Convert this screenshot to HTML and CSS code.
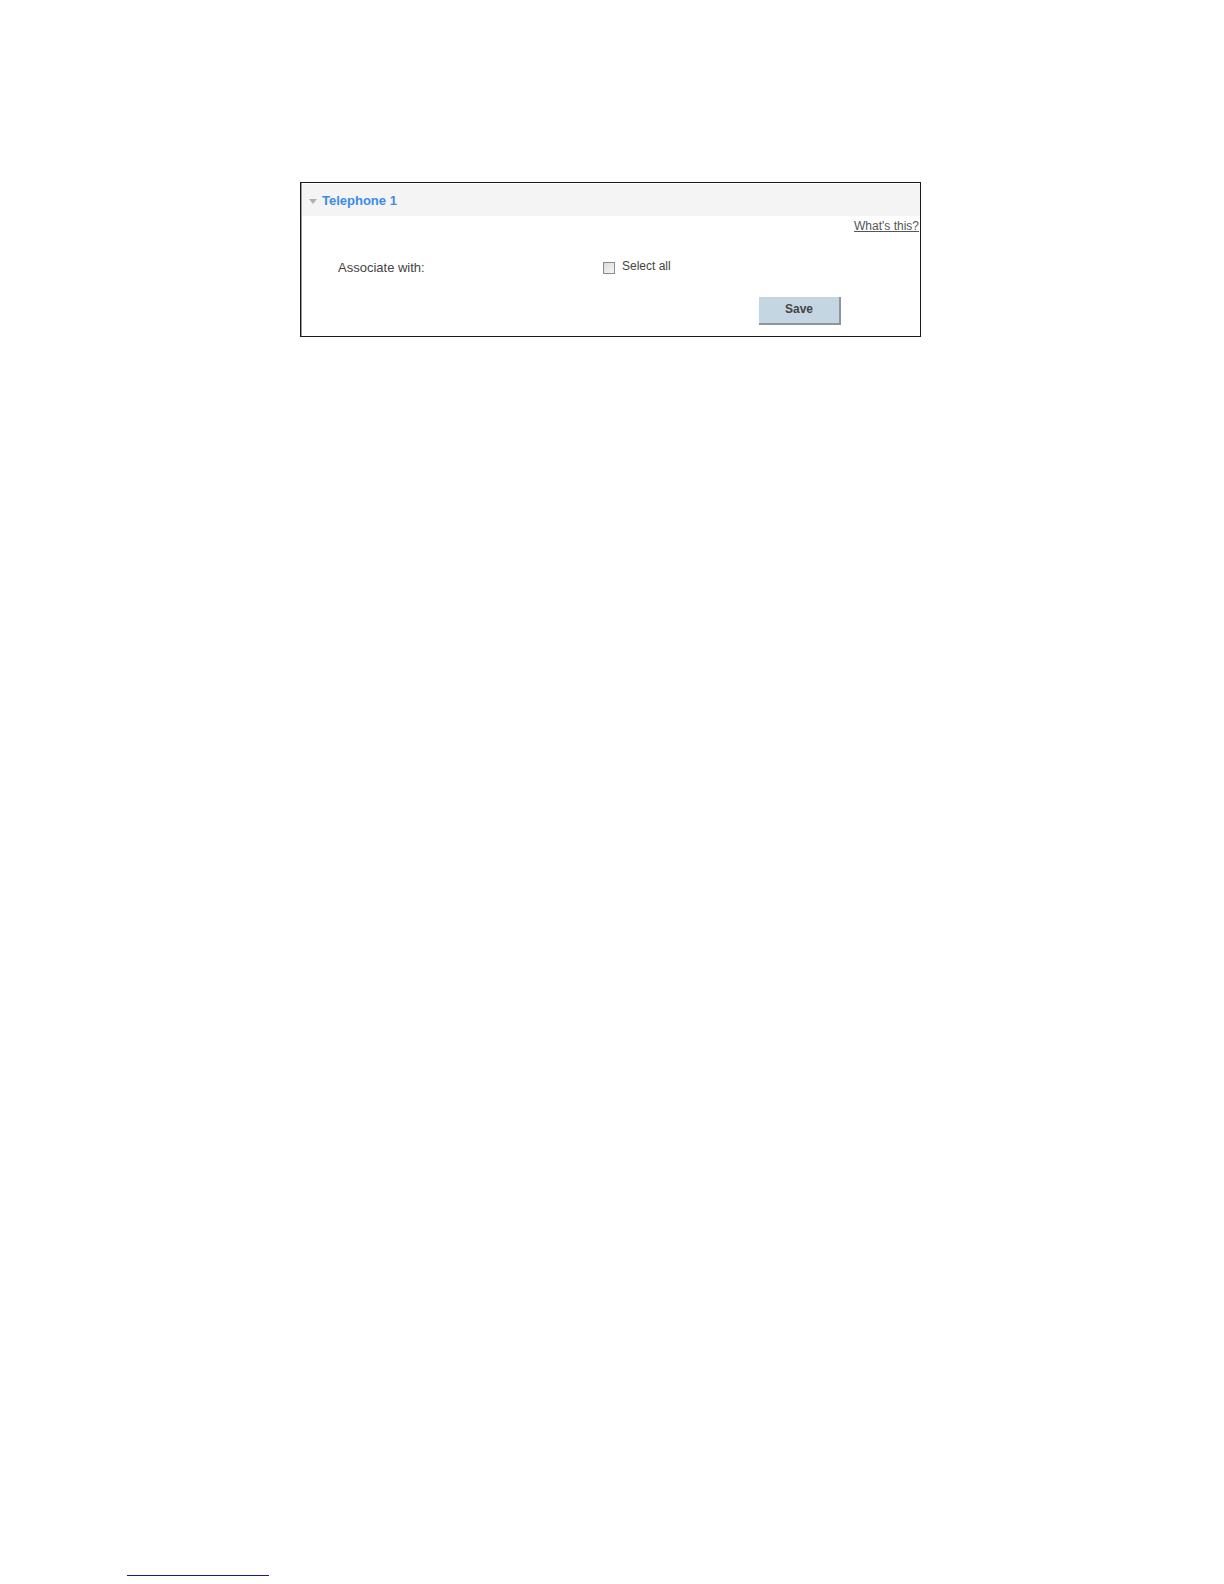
FILE: index.html
```html
<!DOCTYPE html>
<html>
<head>
<meta charset="utf-8">
<link rel="stylesheet" href="styles.css">
</head>
<body>
<div class="page">
  <div class="panel">
    <div class="panel-head">
      <span class="arrow"></span>
      <span class="title">Telephone 1</span>
    </div>
    <div class="help-row"><a class="help" href="#">What's this?</a></div>
    <div class="assoc-row">
      <span class="label">Associate with:</span>
      <label class="check"><span class="box"></span><span class="check-text">Select all</span></label>
    </div>
    <div class="btn-row"><button class="save">Save</button></div>
  </div>
  <div class="spacer"></div>
  <div class="footnote-rule"></div>
</div>
</body>
</html>
```
FILE: styles.css
```css
html, body {
  margin: 0;
  padding: 0;
  background: #fff;
}
.page {
  width: 1224px;
  height: 1584px;
  display: flex;
  flex-direction: column;
  font-family: Arial, "Liberation Sans", sans-serif;
}
.panel {
  margin: 182px 0 0 300px;
  width: 619px;
  height: 153px;
  border: 1px solid #1a1a1a;
  box-shadow: inset 1px 0 0 #9a9a9a;
  display: flex;
  flex-direction: column;
  box-sizing: content-box;
}
.panel-head {
  margin: 1px 0 0 1px;
  height: 32px;
  background: #f4f4f4;
  display: flex;
  align-items: center;
  padding-left: 7px;
  gap: 5px;
}
.arrow {
  width: 0;
  height: 0;
  border-left: 4px solid transparent;
  border-right: 4px solid transparent;
  border-top: 5px solid #a9b3bb;
  margin-top: 3px;
}
.title {
  color: #3d8be8;
  font-weight: bold;
  font-size: 13px;
  padding-top: 1px;
}
.help-row {
  display: flex;
  justify-content: flex-end;
  padding-right: 1px;
  height: 20px;
  align-items: center;
}
.help {
  color: #555;
  font-size: 12px;
  text-decoration: underline;
}
.assoc-row {
  display: flex;
  align-items: center;
  height: 20px;
  margin-top: 20px;
  padding-left: 37px;
}
.label {
  width: 265px;
  font-size: 13px;
  color: #444;
  padding-top: 2px;
}
.check {
  display: flex;
  align-items: center;
  gap: 7px;
}
.box {
  width: 10px;
  height: 10px;
  border: 1px solid #8a8a8a;
  background: linear-gradient(135deg, #dcdcdc, #f4f4f4);
  margin-top: 4px;
}
.check-text {
  font-size: 12px;
  color: #444;
}
.btn-row {
  display: flex;
  padding-left: 458px;
  margin-top: 21px;
}
.save {
  width: 82px;
  height: 28px;
  background: #c5d6e3;
  border: none;
  border-right: 2px solid #8c959c;
  border-bottom: 2px solid #8c959c;
  color: #444;
  font-family: Arial, "Liberation Sans", sans-serif;
  font-weight: bold;
  font-size: 12px;
  padding: 0 0 2px 0;
}
.spacer {
  flex: 1;
}
.footnote-rule {
  margin: 0 0 8px 127px;
  width: 142px;
  height: 1px;
  background: #1b1b8a;
}
```
